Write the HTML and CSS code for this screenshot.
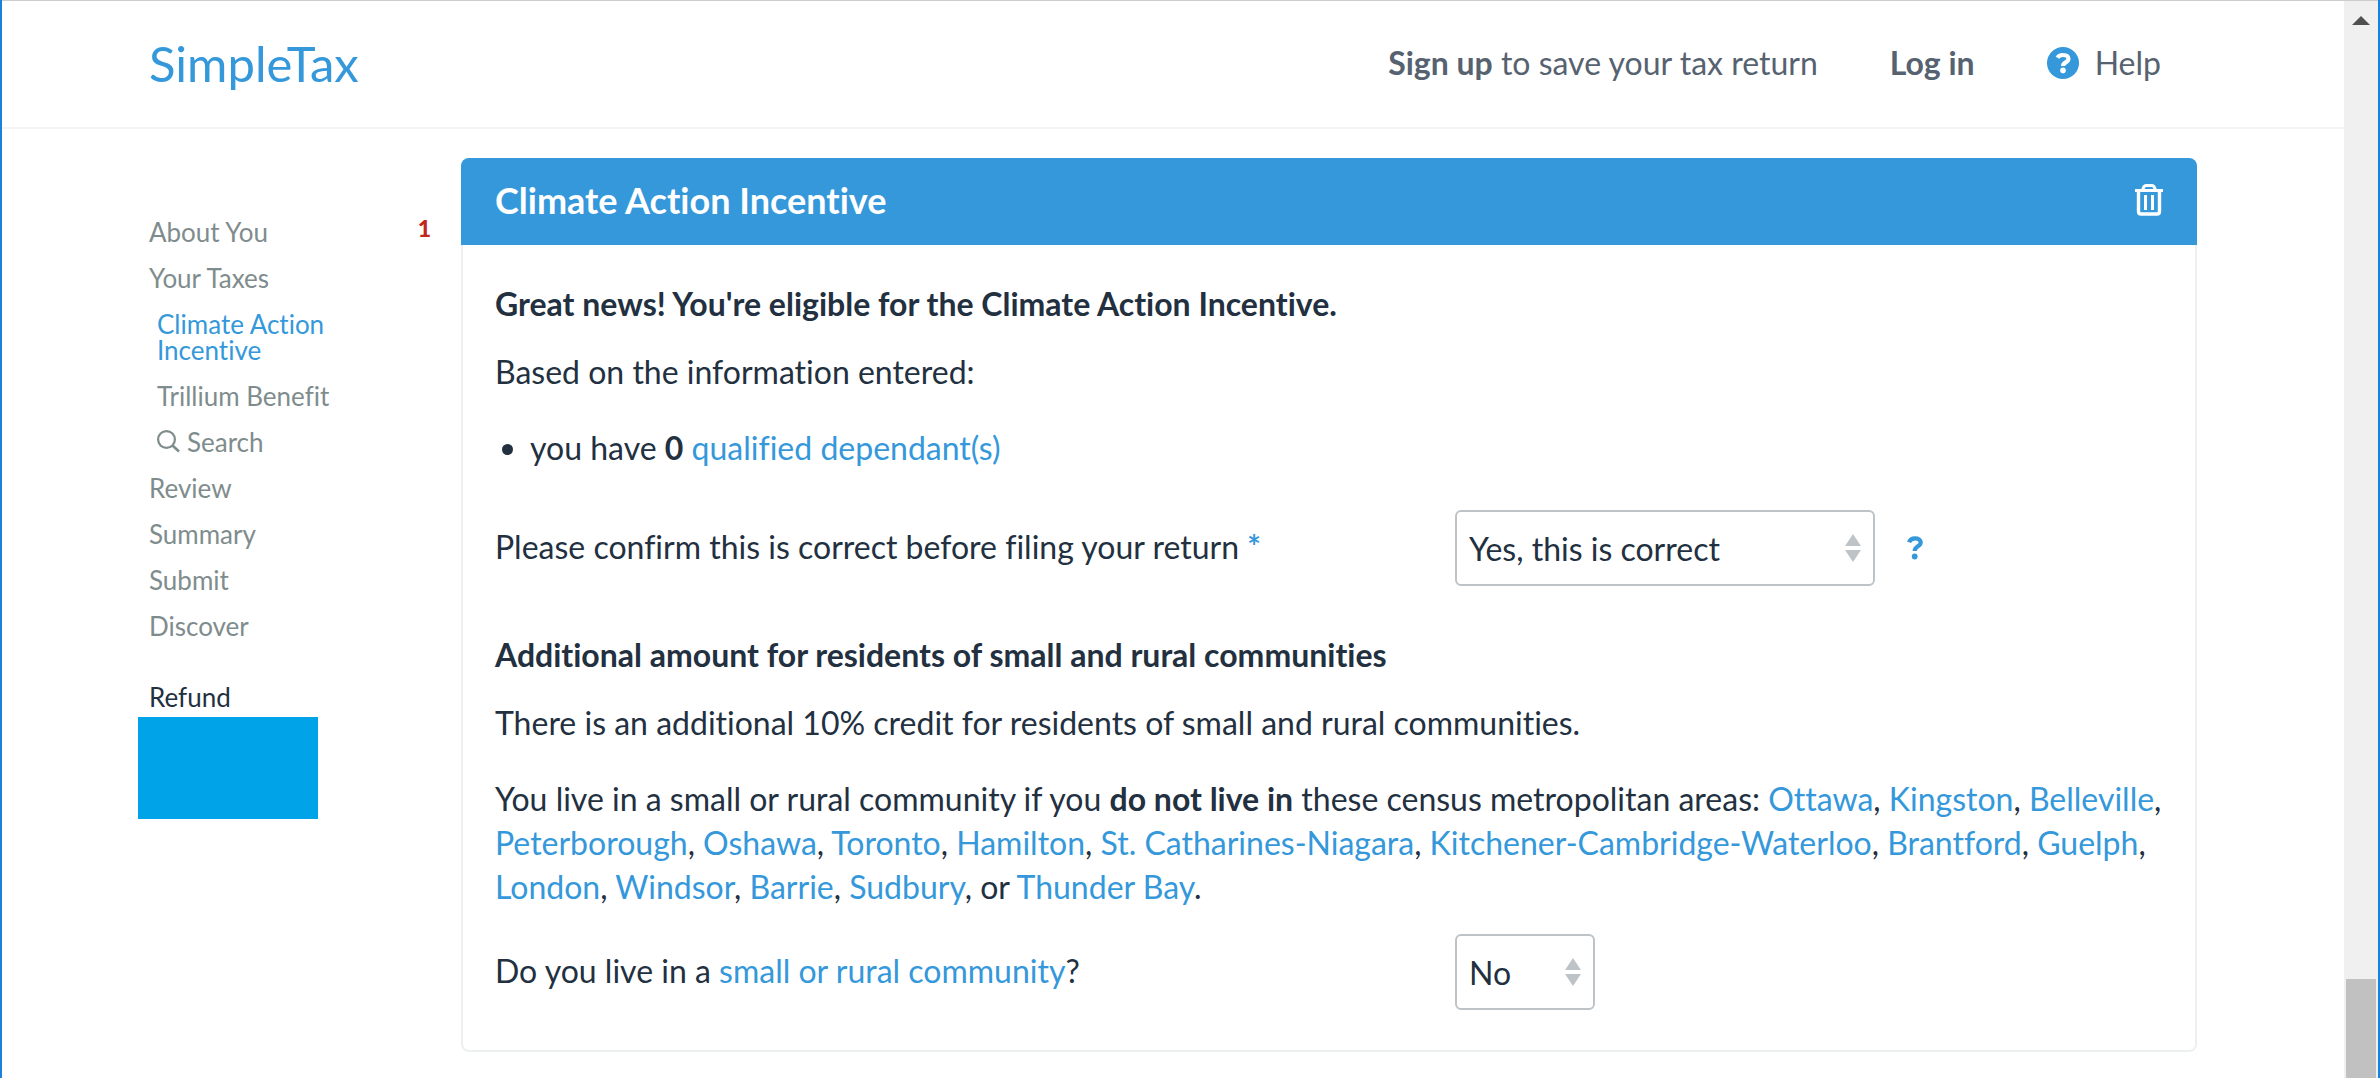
FILE: index.html
```html
<!DOCTYPE html>
<html lang="en">
<head>
  <meta charset="utf-8">
  <meta name="viewport" content="width=device-width, initial-scale=1">
  <title>SimpleTax</title>
  <link rel="stylesheet" href="styles.css">
</head>
<body>
  <div class="window">
    <div class="page">
      <header class="topbar">
        <div class="container topbar-inner">
          <a class="brand" href="#">SimpleTax</a>
          <nav class="topnav" aria-label="Account">
            <a href="#"><strong>Sign up</strong> to save your tax return</a>
            <a href="#"><strong>Log in</strong></a>
            <a class="help-link" href="#">
              <svg class="help-icon" viewBox="0 0 32 32" aria-hidden="true">
                <circle cx="16" cy="16" r="16" fill="#3498db"/>
                <path d="M10.500 10.800C11.500 8.800 13.500 7.900 16.200 8c3.200 0 5.200 1.500 5.200 3.900 0 3.700-5.400 3.300-5.400 7.100" fill="none" stroke="#fff" stroke-width="4.200"/>
                <circle cx="16" cy="23.400" r="2.800" fill="#fff"/>
              </svg>
              Help
            </a>
          </nav>
        </div>
      </header>

      <div class="container layout">
        <aside class="sidebar">
          <nav aria-label="Sections">
            <ul class="steps">
              <li><a href="#">About You</a><span class="count">1</span></li>
              <li><a href="#">Your Taxes</a></li>
              <li class="sub"><a class="active" href="#">Climate Action Incentive</a></li>
              <li class="sub"><a href="#">Trillium Benefit</a></li>
              <li class="sub"><a class="search" href="#">
                <svg class="search-icon" viewBox="0 0 24 24" aria-hidden="true">
                  <circle cx="9.500" cy="9.500" r="8.400" fill="none" stroke="currentColor" stroke-width="2.200"/>
                  <path d="M15.500 15.500l6.500 6" stroke="currentColor" stroke-width="2.600"/>
                </svg>
                Search</a></li>
              <li><a href="#">Review</a></li>
              <li><a href="#">Summary</a></li>
              <li><a href="#">Submit</a></li>
              <li><a href="#">Discover</a></li>
            </ul>
          </nav>
          <div class="refund">Refund</div>
          <div class="refund-amount"></div>
        </aside>

        <main class="card">
          <div class="card-head">
            <h1>Climate Action Incentive</h1>
            <button class="delete" type="button" aria-label="Delete section">
              <svg viewBox="0 0 28 32" aria-hidden="true">
                <path d="M7.500 6.500C8.500 3 9 1.500 11 1.500h6c2 0 2.500 1.500 3.500 5" fill="none" stroke="#fff" stroke-width="3"/>
                <path d="M0 5h28v3H0z" fill="#fff"/>
                <path d="M3.500 7v20.500q0 2.500 2.500 2.500h16q2.500 0 2.500-2.500V7" fill="none" stroke="#fff" stroke-width="3.400"/>
                <path d="M10.500 11v15M17.500 11v15" stroke="#fff" stroke-width="3"/>
              </svg>
            </button>
          </div>
          <form class="card-body">
            <h2>Great news! You're eligible for the Climate Action Incentive.</h2>
            <p class="lead">Based on the information entered:</p>
            <ul class="facts">
              <li>you have <b>0</b> <a href="#">qualified dependant(s)</a></li>
            </ul>
            <div class="field field-confirm">
              <label for="confirm">Please confirm this is correct before filing your return <span class="required">*</span></label>
              <div class="control">
                <span class="select select-wide">
                  <select id="confirm"><option>Yes, this is correct</option><option>No</option></select>
                  <svg class="arrows" viewBox="0 0 16 28" aria-hidden="true"><path d="M8 0l8 12H0zM0 16h16L8 28z" fill="#bdc3c7"/></svg>
                </span>
                <button class="hint" type="button" aria-label="Help with this question">
                  <svg viewBox="0 0 16 24" aria-hidden="true">
                    <path d="M2 6.300C3 3.600 5 2.300 8 2.300c3.300 0 5.700 1.500 5.700 4.300 0 4-6 3.600-6 8.400" fill="none" stroke="#3498db" stroke-width="4.200"/>
                    <circle cx="7.700" cy="20.500" r="2.900" fill="#3498db"/>
                  </svg>
                </button>
              </div>
            </div>
            <h2>Additional amount for residents of small and rural communities</h2>
            <p class="lead">There is an additional 10% credit for residents of small and rural communities.</p>
            <p class="areas">You live in a small or rural community if you <b>do not live in</b> these census metropolitan areas: <a href="#">Ottawa</a>, <a href="#">Kingston</a>, <a href="#">Belleville</a>, <a href="#">Peterborough</a>, <a href="#">Oshawa</a>, <a href="#">Toronto</a>, <a href="#">Hamilton</a>, <a href="#">St. Catharines-Niagara</a>, <a href="#">Kitchener-Cambridge-Waterloo</a>, <a href="#">Brantford</a>, <a href="#">Guelph</a>, <a href="#">London</a>, <a href="#">Windsor</a>, <a href="#">Barrie</a>, <a href="#">Sudbury</a>, or <a href="#">Thunder Bay</a>.</p>
            <div class="field field-rural">
              <label for="rural">Do you live in a <a href="#">small or rural community</a>?</label>
              <div class="control">
                <span class="select select-small">
                  <select id="rural"><option>No</option><option>Yes</option></select>
                  <svg class="arrows" viewBox="0 0 16 28" aria-hidden="true"><path d="M8 0l8 12H0zM0 16h16L8 28z" fill="#bdc3c7"/></svg>
                </span>
              </div>
            </div>
          </form>
        </main>
      </div>
    </div>
    <div class="scrollbar" aria-hidden="true">
      <svg class="scroll-up" viewBox="0 0 18 9"><path d="M9 0l9 9H0z" fill="#505050"/></svg>
      <div class="thumb"></div>
    </div>
  </div>
</body>
</html>
```
FILE: styles.css
```css
* {
  box-sizing: border-box;
}

body {
  margin: 0;
  background: #fff;
  color: #22303f;
  font: 32px/44px Lato, "Open Sans", sans-serif;
  font-variant-ligatures: none;
}

h1, h2, p, ul {
  margin: 0;
}

a {
  color: #3498db;
  text-decoration: none;
}

b, strong {
  font-weight: 700;
}

.window {
  display: flex;
  min-height: 100vh;
  border: solid #1a80d9;
  border-width: 0 2px;
}

.page {
  flex: 1;
  min-width: 0;
  border-top: 1px solid #ccc;
}

.container {
  max-width: 2048px;
  margin: 0 auto;
}

/* Top bar */
.topbar {
  border-bottom: 2px solid #f4f4f4;
}

.topbar-inner {
  display: flex;
  align-items: center;
  justify-content: space-between;
  height: 126px;
  padding: 0 36px 2px 0;
}

.brand {
  font-size: 49px;
}

.topnav {
  display: flex;
  gap: 72px;
}

.topnav a {
  color: #566270;
}

.topnav .help-link {
  display: flex;
  align-items: center;
  gap: 16px;
}

.help-icon {
  width: 32px;
  height: 32px;
}

/* Sidebar */
.layout {
  display: flex;
  align-items: flex-start;
  padding: 29px 0 16px;
}

.sidebar {
  width: 312px;
  padding-top: 61px;
  font-size: 26px;
  line-height: 26px;
}

.steps {
  padding: 0;
  list-style: none;
}

.steps li {
  display: flex;
  justify-content: space-between;
  padding: 0 30px 20px 0;
}

.steps .sub {
  padding-left: 8px;
  padding-right: 100px;
}

.steps a {
  color: #7f8c8d;
}

.steps .active {
  color: #3498db;
}

.steps .search {
  display: flex;
  align-items: center;
  gap: 6px;
}

.search-icon {
  width: 24px;
  height: 24px;
}

.count {
  color: #c0261a;
  font-size: 23px;
  font-weight: 900;
  line-height: 18px;
}

.refund {
  padding: 25px 0 7px;
}

.refund-amount {
  width: 180px;
  height: 102px;
  margin-left: -11px;
  background: #00a2e8;
}

/* Card */
.card {
  flex: 1;
  min-width: 0;
  border: 2px solid #ecf0f1;
  border-top: 0;
  border-radius: 8px;
}

.card-head {
  display: flex;
  align-items: center;
  justify-content: space-between;
  height: 87px;
  margin: 0 -2px;
  padding: 0 34px 3px;
  border-radius: 8px 8px 0 0;
  background: #3498db;
  color: #fff;
}

h1 {
  font-size: 36px;
  font-weight: 700;
}

h2 {
  font-size: 32px;
  font-weight: 700;
}

.delete, .hint {
  display: flex;
  padding: 0;
  border: 0;
  background: none;
}

.delete svg {
  width: 28px;
  height: 32px;
}

.hint svg {
  width: 16px;
  height: 24px;
}

.card-body {
  padding: 37px 32px 40px;
}

.lead {
  margin: 24px 0 32px;
}

.facts {
  padding-left: 35px;
}

.field {
  display: grid;
  grid-template-columns: 960px 1fr;
  align-items: center;
}

.field label {
  padding-bottom: 2px;
}

.field-confirm {
  margin: 40px 0 47px;
}

.field-rural {
  margin-top: 25px;
}

.required {
  color: #3498db;
  font-weight: 700;
}

.control {
  display: flex;
  align-items: center;
  gap: 32px;
}

.select {
  display: grid;
  align-items: center;
}

.select-wide {
  width: 420px;
}

.select-small {
  width: 140px;
}

.select select {
  grid-area: 1 / 1;
  width: 100%;
  height: 76px;
  padding: 2px 40px 0 12px;
  border: 2px solid #bdc3c7;
  border-radius: 6px;
  appearance: none;
  background: #fff;
  color: inherit;
  font: inherit;
}

.arrows {
  grid-area: 1 / 1;
  justify-self: end;
  width: 16px;
  height: 28px;
  margin-right: 14px;
  pointer-events: none;
}

/* Window scroll bar */
.scrollbar {
  display: flex;
  flex-direction: column;
  align-items: center;
  justify-content: space-between;
  width: 34px;
  padding-top: 15px;
  border-top: 1px solid #ccc;
  background: #f0f0f0;
}

.scroll-up {
  width: 18px;
  height: 9px;
}

.thumb {
  width: 30px;
  height: 99px;
  background: #c1c1c1;
}
```
